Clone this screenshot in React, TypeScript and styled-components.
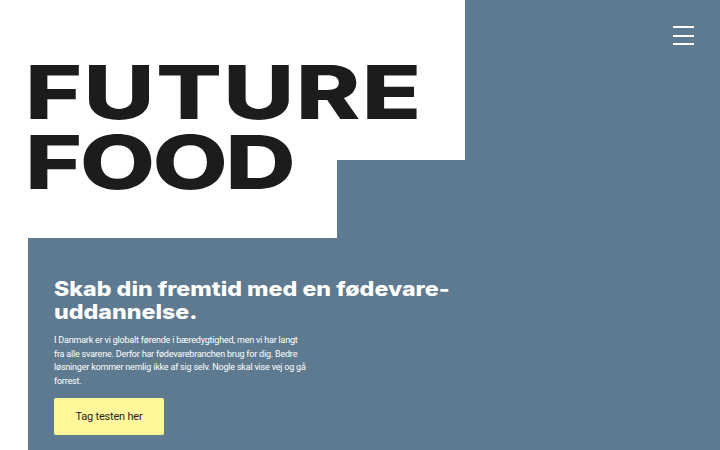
import styled, { createGlobalStyle } from "styled-components";

const GlobalStyle = createGlobalStyle`
  html, body {
    margin: 0;
    padding: 0;
    background: #ffffff;
  }
  * {
    box-sizing: border-box;
  }
`;

const Page = styled.div`
  width: 720px;
  height: 450px;
  overflow: hidden;
  display: flex;
  flex-direction: column;
  background: #5e7a90;
  font-family: Inter, "Liberation Sans", sans-serif;
`;

const Hero = styled.header`
  display: grid;
  grid-template-columns: 337px 128px 1fr;
  grid-template-rows: 160px 78px;
`;

const WhiteBlock = styled.div<{ $col: string; $row: string }>`
  grid-column: ${(p) => p.$col};
  grid-row: ${(p) => p.$row};
  background: #ffffff;
`;

const Title = styled.h1`
  grid-column: 1 / 3;
  grid-row: 1 / 3;
  z-index: 1;
  margin: 0;
  padding: 57px 0 0 19px;
  font-family: Inter, "Liberation Sans", sans-serif;
  font-weight: 800;
  font-size: 74px;
  line-height: 70px;
  color: #1c1c1c;
  transform: scaleX(1.32);
  transform-origin: left top;
`;

const TitleLine = styled.span<{ $spacing: number }>`
  display: block;
  letter-spacing: ${(p) => p.$spacing}px;
`;

const MenuButton = styled.button`
  grid-column: 3 / 4;
  grid-row: 1 / 2;
  justify-self: end;
  align-self: start;
  margin: 26px 26px 0 0;
  padding: 0;
  width: 21px;
  display: flex;
  flex-direction: column;
  gap: 6.5px;
  background: none;
  border: none;
`;

const MenuLine = styled.span`
  display: block;
  height: 2px;
  width: 100%;
  background: #ffffff;
`;

const Lower = styled.section`
  flex: 1;
  display: flex;
`;

const Gutter = styled.div`
  width: 28px;
  background: #ffffff;
`;

const Panel = styled.div`
  flex: 1;
  padding: 40px 0 0 26px;
  display: flex;
  flex-direction: column;
  align-items: flex-start;
`;

const Heading = styled.h2`
  margin: 0;
  width: 360px;
  font-family: Inter, "Liberation Sans", sans-serif;
  font-weight: 800;
  font-size: 20px;
  line-height: 23px;
  color: #ffffff;
  transform: scaleX(1.16);
  transform-origin: left top;
`;

const Body = styled.p`
  margin: 10px 0 0;
  width: 252px;
  font-family: Roboto, "Liberation Sans", sans-serif;
  font-size: 9px;
  line-height: 13.7px;
  letter-spacing: -0.2px;
  color: #ffffff;
`;

const CTA = styled.button`
  margin-top: 9px;
  width: 110px;
  height: 37px;
  border: none;
  border-radius: 2px;
  background: #fff799;
  color: #1f1f1f;
  font-family: Roboto, "Liberation Sans", sans-serif;
  font-size: 11px;
  letter-spacing: -0.2px;
  cursor: pointer;
`;

export default function App() {
  return (
    <>
      <GlobalStyle />
      <Page>
        <Hero>
          <WhiteBlock $col="1 / 3" $row="1 / 2" />
          <WhiteBlock $col="1 / 2" $row="2 / 3" />
          <Title>
            <TitleLine $spacing={1}>FUTURE</TitleLine>
            <TitleLine $spacing={-2}>FOOD</TitleLine>
          </Title>
          <MenuButton aria-label="Menu">
            <MenuLine />
            <MenuLine />
            <MenuLine />
          </MenuButton>
        </Hero>
        <Lower>
          <Gutter />
          <Panel>
            <Heading>Skab din fremtid med en fødevare-uddannelse.</Heading>
            <Body>
              I Danmark er vi globalt førende i bæredygtighed, men vi har langt
              fra alle svarene. Derfor har fødevarebranchen brug for dig. Bedre
              løsninger kommer nemlig ikke af sig selv. Nogle skal vise vej og gå
              forrest.
            </Body>
            <CTA>Tag testen her</CTA>
          </Panel>
        </Lower>
      </Page>
    </>
  );
}
